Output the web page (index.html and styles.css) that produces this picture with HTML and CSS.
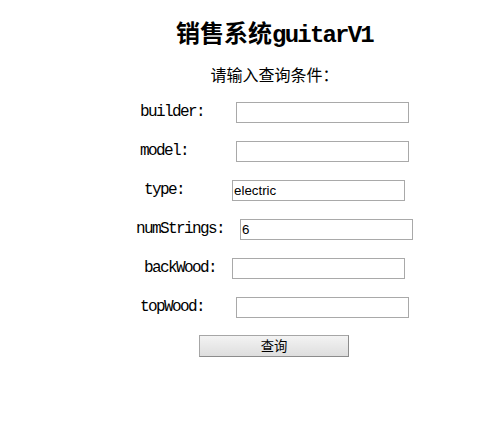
FILE: index.html
```html
<!DOCTYPE html>
<html lang="zh">
<head>
<meta charset="utf-8">
<title>销售系统guitarV1</title>
<link rel="stylesheet" href="styles.css">
</head>
<body>
<main class="page">
  <h2 class="title">销售系统<span class="latin">guitarV1</span></h2>
  <p class="prompt">请输入查询条件：</p>
  <form class="form">
    <div class="row"><span class="lbl">builder:&nbsp;&nbsp;&nbsp;&nbsp;</span><input class="field" type="text" value=""></div>
    <div class="row"><span class="lbl">model:&nbsp;&nbsp;&nbsp;&nbsp;&nbsp;&nbsp;</span><input class="field" type="text" value=""></div>
    <div class="row"><span class="lbl">type:&nbsp;&nbsp;&nbsp;&nbsp;&nbsp;&nbsp;</span><input class="field" type="text" value="electric"></div>
    <div class="row"><span class="lbl">numStrings:&nbsp;&nbsp;</span><input class="field" type="text" value="6"></div>
    <div class="row"><span class="lbl">backWood:&nbsp;&nbsp;</span><input class="field" type="text" value=""></div>
    <div class="row"><span class="lbl">topWood:&nbsp;&nbsp;&nbsp;&nbsp;</span><input class="field" type="text" value=""></div>
    <div class="row"><button class="btn" type="button">查询</button></div>
  </form>
</main>
</body>
</html>
```

FILE: styles.css
```css
html, body {
  background: #ffffff;
}
body {
  margin: 8px;
  color: #000;
  font-family: "Liberation Mono", "Noto Sans CJK SC", monospace;
}
.page {
  margin-left: 57px;
  text-align: center;
}
.title {
  margin: 10px 0 0;
  font-size: 24px;
  line-height: 28px;
  font-weight: bold;
  font-family: "Noto Sans CJK SC", sans-serif;
}
.title .latin {
  font-family: "Liberation Mono", monospace;
  letter-spacing: -1.8px;
}
.prompt {
  margin: 14px 0 0;
  font-size: 16px;
  line-height: 20px;
  font-family: "Noto Sans CJK SC", sans-serif;
}
.form {
  margin-top: 17px;
  display: flex;
  flex-direction: column;
  gap: 16px;
}
.row {
  height: 23px;
  line-height: 23px;
  white-space: nowrap;
}
.lbl {
  font-family: "Liberation Mono", monospace;
  font-size: 16px;
  letter-spacing: -1.6px;
  vertical-align: middle;
}
.field {
  box-sizing: border-box;
  width: 173px;
  height: 21px;
  margin: 0;
  padding: 0 1px;
  border: 1px solid #a9a9a9;
  font-family: "Liberation Sans", Arial, sans-serif;
  font-size: 13.33px;
  color: #000;
  background: #fff;
  vertical-align: middle;
  outline: none;
}
.btn {
  box-sizing: border-box;
  width: 150px;
  height: 22px;
  margin: 0 1px 0 0;
  padding: 0;
  border: 1px solid #a6a6a6;
  border-right-color: #8c8c8c;
  border-bottom-color: #8c8c8c;
  background: linear-gradient(#f3f3f3, #dedede);
  font-family: "Noto Sans CJK SC", sans-serif;
  font-size: 13.33px;
  line-height: 20px;
  color: #000;
  vertical-align: middle;
}
```
